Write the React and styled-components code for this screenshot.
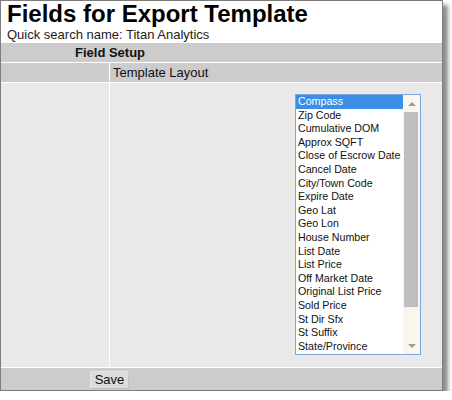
import React from 'react'
import styled, { createGlobalStyle } from 'styled-components'

const GlobalStyle = createGlobalStyle`
  body {
    margin: 0;
    background: #fff;
    font-family: Arial, "Liberation Sans", sans-serif;
  }
`

const Window = styled.div`
  width: 441px;
  border: 1px solid #7d7d7d;
  background: #fff;
  box-shadow: 5px 5px 4px rgba(0, 0, 0, 0.45);
`

const Title = styled.h1`
  margin: 0;
  padding-left: 6px;
  font-size: 24px;
  line-height: 26px;
  font-weight: bold;
  color: #000;
`

const SubTitle = styled.div`
  padding-left: 6px;
  font-size: 13px;
  line-height: 16px;
  color: #222;
`

const Table = styled.div`
  display: grid;
  grid-template-columns: 108px 1fr;
  grid-template-rows: 19px 19px 284px 22px;
  gap: 1px;
  background: #fff;
`

const Cell = styled.div`
  grid-column: ${p => (p.$span ? '1 / -1' : 'auto')};
  background: ${p => (p.$body ? '#e9e9e9' : '#cccccc')};
  padding-left: ${p => p.$indent || 0}px;
  font-size: 13px;
  line-height: 19px;
  color: #111;
  font-weight: ${p => (p.$bold ? 'bold' : 'normal')};
`

const BodyCell = styled.div`
  background: #e9e9e9;
  padding: 11px 0 0 185px;
`

const Footer = styled.div`
  grid-column: 1 / -1;
  background: #cccccc;
  padding: 2px 0 0 89px;
`

const Button = styled.button`
  width: 39px;
  height: 18px;
  padding: 0;
  border: 1px solid #e4e4e4;
  border-right-color: #c4c4c4;
  border-bottom-color: #bdbdbd;
  background: #dcdcdc;
  font-family: Arial, "Liberation Sans", sans-serif;
  font-size: 13px;
  color: #111;
`

const ListBox = styled.div`
  display: flex;
  width: 124px;
  height: 259px;
  border: 1px solid #7ea6de;
  background: #fff;
`

const Options = styled.div`
  flex: 1;
  overflow: hidden;
`

const Option = styled.div`
  height: 13.6px;
  line-height: 13.6px;
  padding-left: 2px;
  font-size: 10.67px;
  white-space: nowrap;
  color: ${p => (p.$selected ? '#fff' : '#111')};
  background: ${p => (p.$selected ? '#3a8ee6' : 'transparent')};
`

const ScrollBar = styled.div`
  width: 17px;
  display: flex;
  flex-direction: column;
  background: #fbf6ec;
`

const ArrowBox = styled.div`
  height: 17px;
  display: flex;
  align-items: center;
  justify-content: center;
`

const Arrow = styled.div`
  width: 0;
  height: 0;
  border-left: 4px solid transparent;
  border-right: 4px solid transparent;
  ${p =>
    p.$down
      ? 'border-top: 4px solid #9c9c9c;'
      : 'border-bottom: 4px solid #9c9c9c;'}
`

const Thumb = styled.div`
  height: 195px;
  margin: 0 2px 0 1px;
  background: #bfbfbf;
`

const Spacer = styled.div`
  flex: 1;
`

const fields = [
  'Compass',
  'Zip Code',
  'Cumulative DOM',
  'Approx SQFT',
  'Close of Escrow Date',
  'Cancel Date',
  'City/Town Code',
  'Expire Date',
  'Geo Lat',
  'Geo Lon',
  'House Number',
  'List Date',
  'List Price',
  'Off Market Date',
  'Original List Price',
  'Sold Price',
  'St Dir Sfx',
  'St Suffix',
  'State/Province',
]

export default function App() {
  return (
    <>
      <GlobalStyle />
      <Window>
        <Title>Fields for Export Template</Title>
        <SubTitle>Quick search name: Titan Analytics</SubTitle>
        <Table>
          <Cell $span $bold $indent={74}>Field Setup</Cell>
          <Cell />
          <Cell $indent={3}>Template Layout</Cell>
          <Cell $body />
          <BodyCell>
            <ListBox>
              <Options>
                {fields.map((f, i) => (
                  <Option key={f} $selected={i === 0}>{f}</Option>
                ))}
              </Options>
              <ScrollBar>
                <ArrowBox><Arrow /></ArrowBox>
                <Thumb />
                <Spacer />
                <ArrowBox><Arrow $down /></ArrowBox>
              </ScrollBar>
            </ListBox>
          </BodyCell>
          <Footer>
            <Button>Save</Button>
          </Footer>
        </Table>
      </Window>
    </>
  )
}
